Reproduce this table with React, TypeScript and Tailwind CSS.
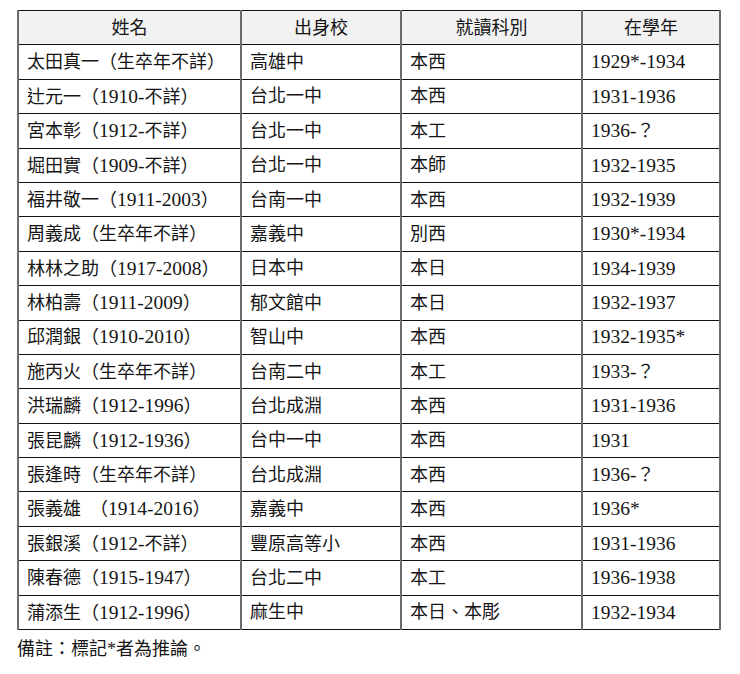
import React from 'react';

interface Row {
  name: string;
  school: string;
  dept: string;
  years: string;
}

const rows: Row[] = [
  { name: '太田真一（生卒年不詳）', school: '高雄中', dept: '本西', years: '1929*-1934' },
  { name: '辻元一（1910-不詳）', school: '台北一中', dept: '本西', years: '1931-1936' },
  { name: '宮本彰（1912-不詳）', school: '台北一中', dept: '本工', years: '1936-？' },
  { name: '堀田實（1909-不詳）', school: '台北一中', dept: '本師', years: '1932-1935' },
  { name: '福井敬一（1911-2003）', school: '台南一中', dept: '本西', years: '1932-1939' },
  { name: '周義成（生卒年不詳）', school: '嘉義中', dept: '別西', years: '1930*-1934' },
  { name: '林林之助（1917-2008）', school: '日本中', dept: '本日', years: '1934-1939' },
  { name: '林柏壽（1911-2009）', school: '郁文館中', dept: '本日', years: '1932-1937' },
  { name: '邱潤銀（1910-2010）', school: '智山中', dept: '本西', years: '1932-1935*' },
  { name: '施丙火（生卒年不詳）', school: '台南二中', dept: '本工', years: '1933-？' },
  { name: '洪瑞麟（1912-1996）', school: '台北成淵', dept: '本西', years: '1931-1936' },
  { name: '張昆麟（1912-1936）', school: '台中一中', dept: '本西', years: '1931' },
  { name: '張逢時（生卒年不詳）', school: '台北成淵', dept: '本西', years: '1936-？' },
  { name: '張義雄　（1914-2016）', school: '嘉義中', dept: '本西', years: '1936*' },
  { name: '張銀溪（1912-不詳）', school: '豐原高等小', dept: '本西', years: '1931-1936' },
  { name: '陳春德（1915-1947）', school: '台北二中', dept: '本工', years: '1936-1938' },
  { name: '蒲添生（1912-1996）', school: '麻生中', dept: '本日、本彫', years: '1932-1934' },
];

// digits in the source are set a bit wider than the CJK body text
function Mixed({ text }: { text: string }) {
  const parts = text.split(/([0-9*\-]+)/).filter(Boolean);
  return (
    <>
      {parts.map((p, i) =>
        /^[0-9*\-]+$/.test(p) ? (
          <span key={i} className="text-[19.5px]">{p}</span>
        ) : (
          <span key={i}>{p}</span>
        )
      )}
    </>
  );
}

const cell = 'h-[34.4px] px-[8px] py-0 border-x-2 border-x-[#6b6b6b] border-y border-y-[#111] align-middle';

export default function App() {
  return (
    <div
      className="w-[740px] h-[674px] bg-white text-[#151515] pt-[10px] pl-[17px]"
      style={{ fontFamily: '"Liberation Serif", "Noto Sans CJK TC", serif' }}
    >
      <table className="border-collapse table-fixed w-[702px] text-[18px] leading-none">
        <colgroup>
          <col className="w-[223px]" />
          <col className="w-[160px]" />
          <col className="w-[181px]" />
          <col className="w-[138px]" />
        </colgroup>
        <thead>
          <tr className="bg-[#f2f2f2]">
            <th className={`${cell} font-normal text-center`}>姓名</th>
            <th className={`${cell} font-normal text-center`}>出身校</th>
            <th className={`${cell} font-normal text-center`}>就讀科別</th>
            <th className={`${cell} font-normal text-center`}>在學年</th>
          </tr>
        </thead>
        <tbody>
          {rows.map((r, i) => (
            <tr key={i}>
              <td className={`${cell} whitespace-nowrap`}><Mixed text={r.name} /></td>
              <td className={cell}>{r.school}</td>
              <td className={cell}>{r.dept}</td>
              <td className={cell}><Mixed text={r.years} /></td>
            </tr>
          ))}
        </tbody>
      </table>
      <p className="mt-[10px] text-[18px] leading-none">備註：標記*者為推論。</p>
    </div>
  );
}
